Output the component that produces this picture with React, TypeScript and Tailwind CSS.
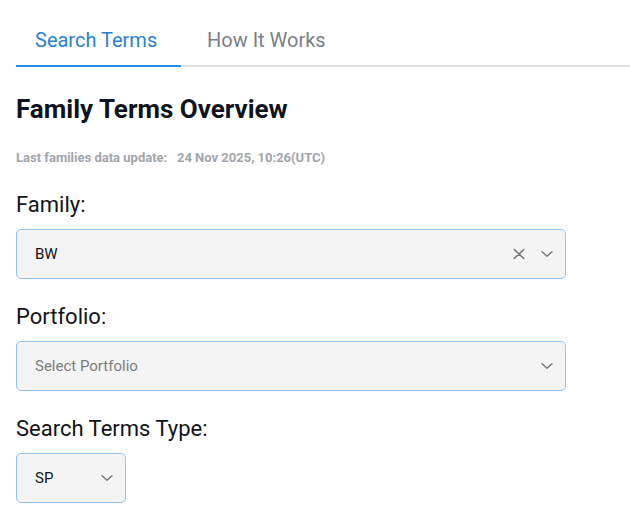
import React from "react";

const Chevron = () => (
  <svg width="12" height="12" viewBox="0 0 12 12" fill="none">
    <path d="M1 3.8 L6 8.2 L11 3.8" stroke="#707070" strokeWidth="1.3" strokeLinecap="round" strokeLinejoin="round" />
  </svg>
);

const Cross = () => (
  <svg width="12" height="12" viewBox="0 0 12 12" fill="none">
    <path d="M1.2 1.5 L10.8 10.5 M10.8 1.5 L1.2 10.5" stroke="#707070" strokeWidth="1.5" strokeLinecap="round" />
  </svg>
);

export default function App() {
  return (
    <div className="w-[630px] h-[520px] bg-white px-4 pt-4 overflow-hidden" style={{ fontFamily: "Roboto, 'Liberation Sans', sans-serif" }}>
      <div className="flex border-b-2 border-[#dfe1e5] mr-[-16px]">
        <div className="relative w-[165px] pl-[19px] h-[49px] flex items-center pb-[2px] text-[20px] text-[#2b80d0]">
          Search Terms
          <div className="absolute left-0 right-0 bottom-[-2px] h-[2px] bg-[#2a8be6]" />
        </div>
        <div className="pl-[26px] h-[49px] flex items-center pb-[2px] text-[20px] text-[#7b7f86]">How It Works</div>
      </div>

      <h1 className="mt-[26px] text-[26px] leading-[32px] font-bold text-[#0f1320]">Family Terms Overview</h1>

      <div className="mt-[25px] text-[13px] leading-[16px] font-bold text-[#a2a5ab] whitespace-pre">Last families data update:   24 Nov 2025, 10:26(UTC)</div>

      <div className="mt-[26px] text-[22px] leading-[26px] text-[#111418]">Family:</div>
      <div className="mt-[11px] w-[550px] h-[50px] rounded-[5px] border border-[#8ec3f6] bg-[#f4f4f4] flex items-center pl-[18px] pr-[12px]">
        <span className="flex-1 text-[15px] text-[#111418]">BW</span>
        <span className="flex items-center"><Cross /></span>
        <span className="ml-[16px] flex items-center"><Chevron /></span>
      </div>

      <div className="mt-[25px] text-[22px] leading-[26px] text-[#111418]">Portfolio:</div>
      <div className="mt-[11px] w-[550px] h-[50px] rounded-[5px] border border-[#8ec3f6] bg-[#f4f4f4] flex items-center pl-[18px] pr-[12px]">
        <span className="flex-1 text-[15px] text-[#7d7d7d]">Select Portfolio</span>
        <Chevron />
      </div>

      <div className="mt-[25px] text-[22px] leading-[26px] text-[#111418]">Search Terms Type:</div>
      <div className="mt-[11px] w-[110px] h-[50px] rounded-[5px] border border-[#8ec3f6] bg-[#f4f4f4] flex items-center pl-[18px] pr-[12px]">
        <span className="flex-1 text-[15px] text-[#111418]">SP</span>
        <Chevron />
      </div>
    </div>
  );
}
